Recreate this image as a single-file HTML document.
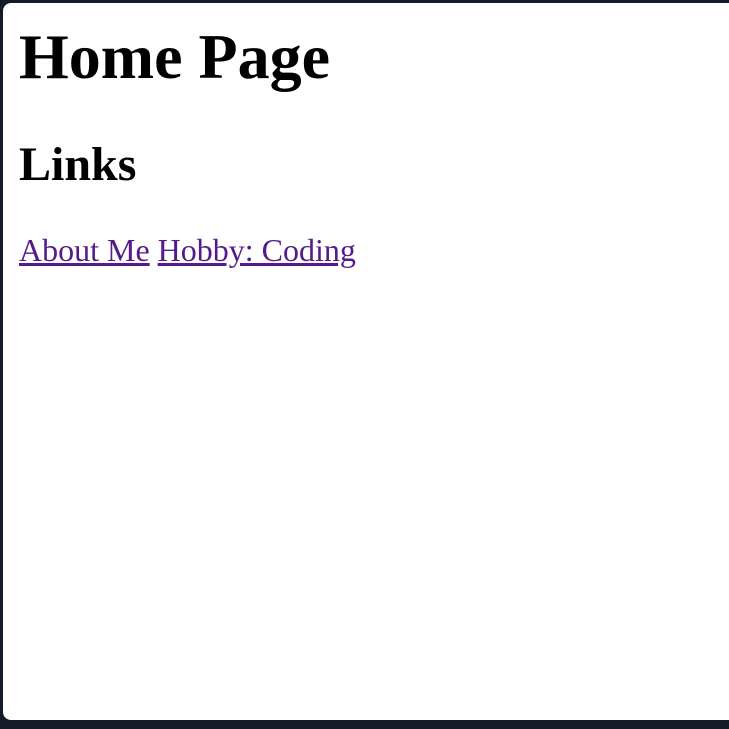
<!DOCTYPE html>
<html><head><style>
html,body{margin:0;padding:0;background:#151a28;width:729px;height:729px;overflow:hidden}
.page{position:absolute;left:3px;top:3px;width:740px;height:717px;background:#fff;border-radius:8px}
.t{position:absolute;left:19px;margin:0;line-height:1;font-family:"Liberation Serif",serif;color:#000;white-space:nowrap}
h1.t{font-size:64px;top:25px;font-weight:bold}
h2.t{font-size:48px;top:141px;font-weight:bold}
p.t{font-size:32px;top:234px}
a{color:#551a8b;text-decoration:underline}
</style></head><body>
<div class="page"></div>
<h1 class="t">Home Page</h1>
<h2 class="t">Links</h2>
<p class="t"><a href="#">About Me</a> <a href="#">Hobby: Coding</a></p>
</body></html>
